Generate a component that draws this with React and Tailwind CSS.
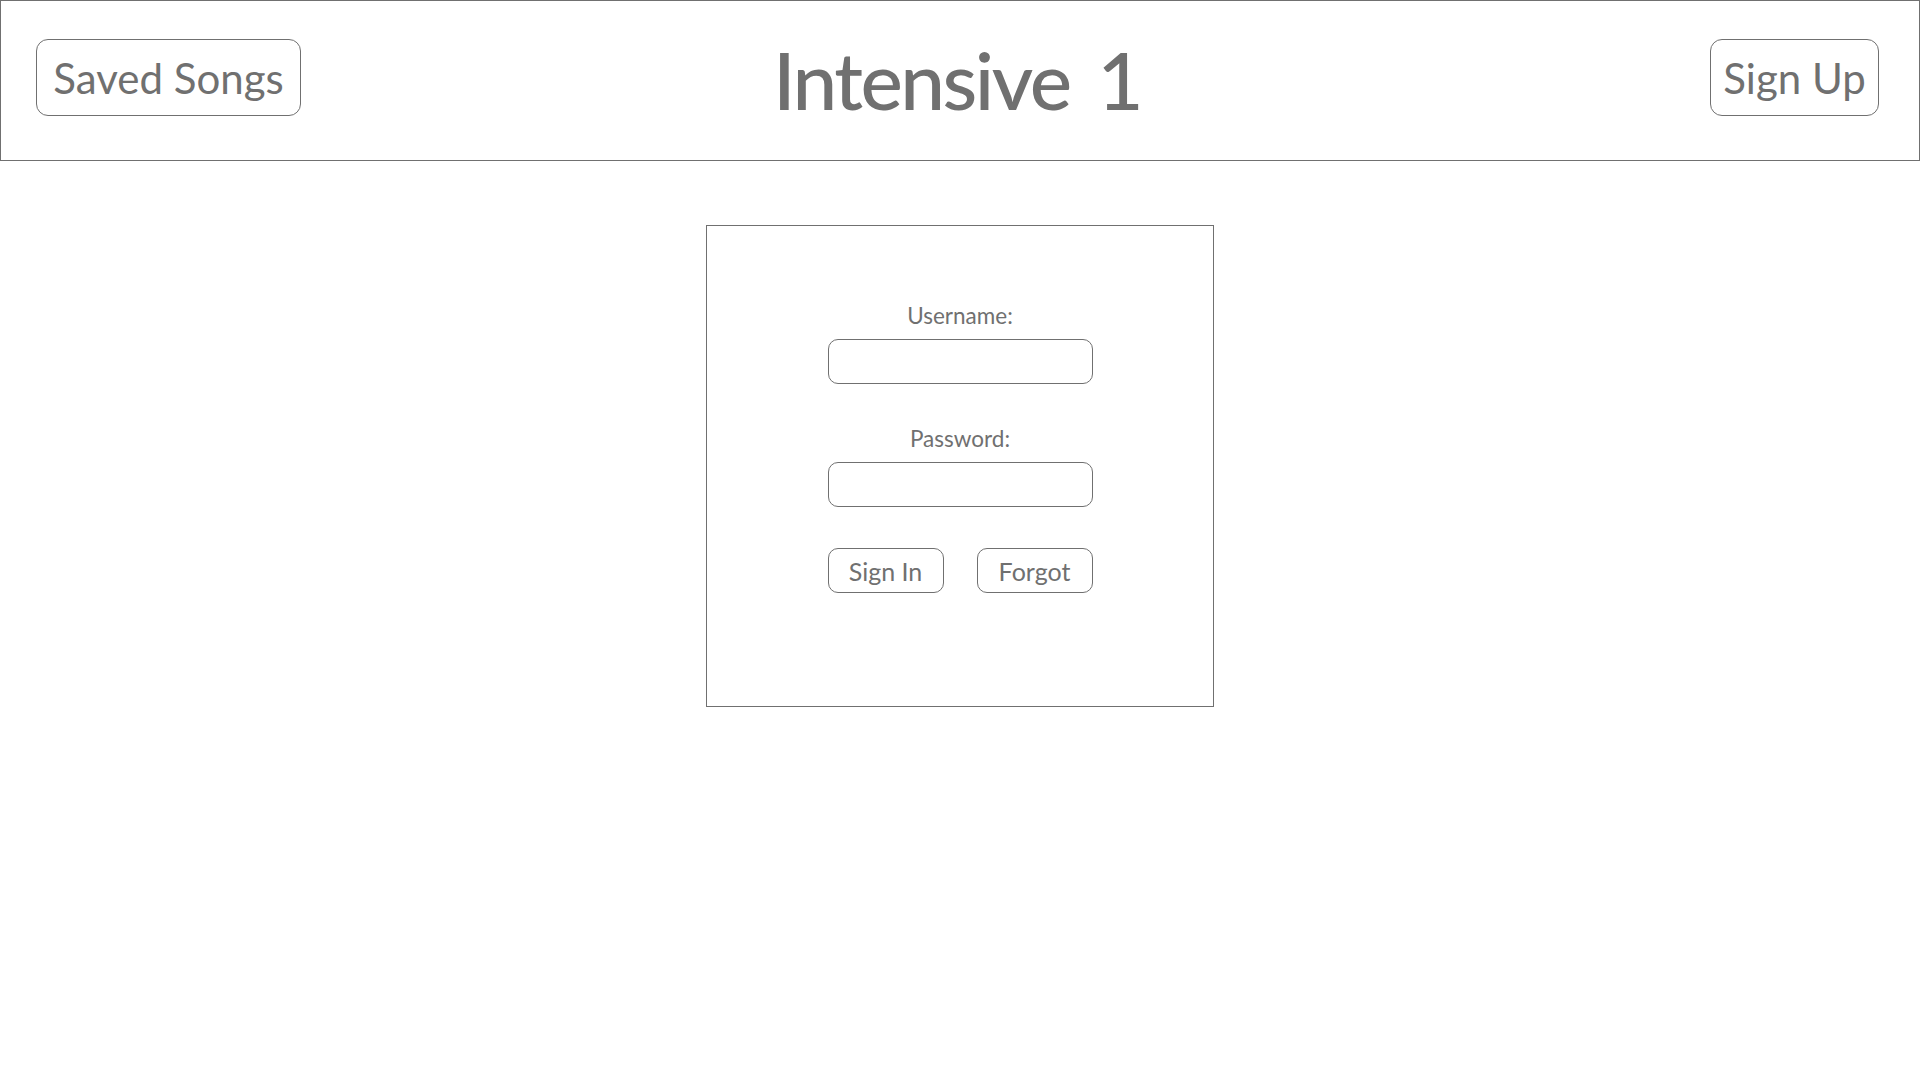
import React from "react";

export default function App() {
  return (
    <div className="min-h-screen w-full bg-white font-['Lato','Open_Sans',sans-serif] text-[#707070]">
      <header className="grid h-[161px] grid-cols-[1fr_auto_1fr] items-start border border-[#707070] pt-[38px]">
        <div className="flex justify-start pl-[35px]">
          <button className="flex h-[77px] w-[265px] items-center justify-center rounded-[12px] border border-[#707070] text-[42px] leading-none">
            Saved Songs
          </button>
        </div>
        <h1 className="mr-[6px] text-[80px] font-medium leading-none tracking-[-2.5px] [word-spacing:10px]">Intensive 1</h1>
        <div className="flex justify-end pr-[40px]">
          <button className="flex h-[77px] w-[169px] items-center justify-center rounded-[12px] border border-[#707070] text-[42px] leading-none">
            Sign Up
          </button>
        </div>
      </header>

      <main className="flex justify-center pt-[64px]">
        <div className="flex h-[482px] w-[508px] flex-col items-center border border-[#707070] pt-[79px]">
          <label className="text-[22.5px] leading-none">Username:</label>
          <input className="mt-[11px] h-[45px] w-[265px] rounded-[10px] border border-[#707070] outline-none" />
          <label className="mt-[44px] text-[22.5px] leading-none">Password:</label>
          <input type="password" className="mt-[12px] h-[45px] w-[265px] rounded-[10px] border border-[#707070] outline-none" />
          <div className="mt-[41px] flex w-[265px] justify-between">
            <button className="flex h-[45px] w-[116px] items-center justify-center rounded-[10px] border border-[#707070] pt-[2px] text-[25px] leading-none">
              Sign In
            </button>
            <button className="flex h-[45px] w-[116px] items-center justify-center rounded-[10px] border border-[#707070] pt-[2px] text-[25px] leading-none">
              Forgot
            </button>
          </div>
        </div>
      </main>
    </div>
  );
}
